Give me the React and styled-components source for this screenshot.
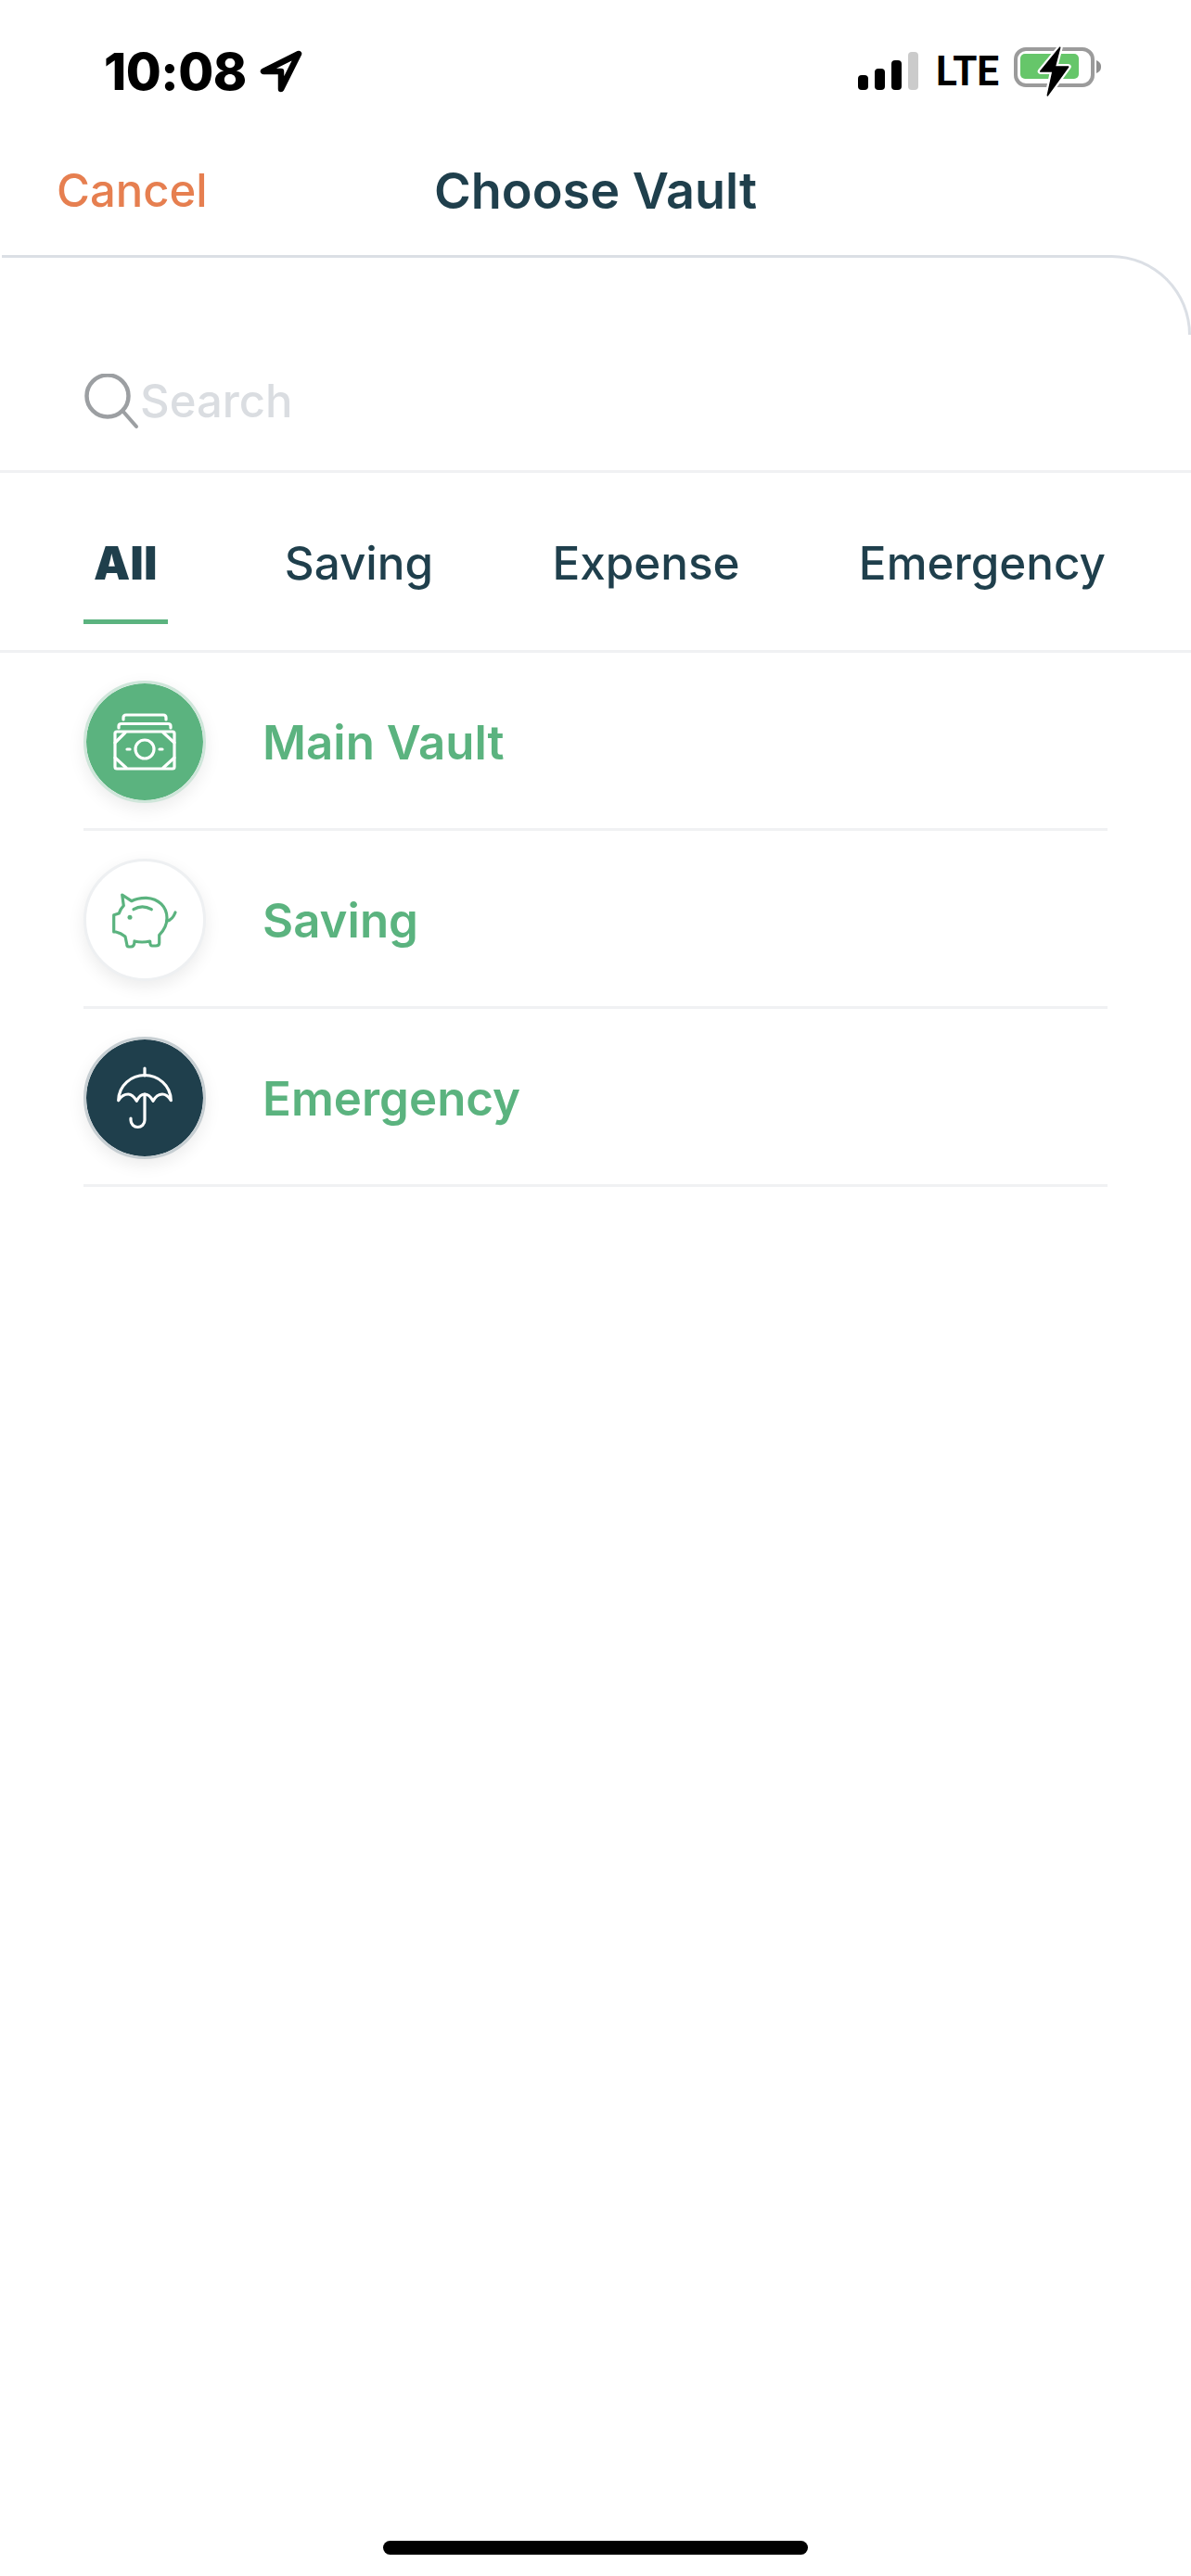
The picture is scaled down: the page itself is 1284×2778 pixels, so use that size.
import styled, { createGlobalStyle } from "styled-components";

const GlobalStyle = createGlobalStyle`
  html, body {
    margin: 0;
    padding: 0;
    background: #ffffff;
  }
  body {
    font-family: Inter, "Liberation Sans", sans-serif;
  }
`;

const Page = styled.div`
  display: flex;
  flex-direction: column;
  height: 2778px;
  overflow: hidden;
  background: #fff;
`;

const StatusBar = styled.div`
  display: flex;
  align-items: center;
  justify-content: space-between;
  height: 150px;
  box-sizing: border-box;
  padding: 3px 94px 0 112px;
  color: #000;
`;

const StatusLeft = styled.div`
  display: flex;
  align-items: center;
  gap: 14px;
`;

const Time = styled.span`
  font-size: 55px;
  font-weight: 800;
  letter-spacing: -0.5px;
`;

const StatusRight = styled.div`
  display: flex;
  align-items: center;
  gap: 19px;
`;

const Signal = styled.div`
  display: flex;
  align-items: flex-end;
  gap: 7px;
  height: 41px;
`;

const SignalBar = styled.span`
  width: 11px;
  height: ${(p) => p.$h}px;
  border-radius: 4px;
  background: ${(p) => (p.$off ? "#cbcbcb" : "#000")};
`;

const Lte = styled.span`
  width: 62px;
  font-family: Roboto, sans-serif;
  font-size: 44px;
  font-weight: 700;
  line-height: 1;
  transform: scaleX(0.96);
  transform-origin: left center;
`;

const NavBar = styled.div`
  display: grid;
  grid-template-columns: 1fr auto 1fr;
  align-items: center;
  height: 125px;
  box-sizing: border-box;
  padding: 0 61px 14px;
`;

const CancelText = styled.span`
  font-size: 49px;
  font-weight: 500;
  color: #e67f50;
`;

const Title = styled.span`
  font-size: 54px;
  font-weight: 600;
  color: #1f3f4c;
`;

const SearchPanel = styled.div`
  position: relative;
  display: flex;
  align-items: center;
  gap: 1px;
  height: 235px;
  padding: 83px 90px 0;
  box-sizing: border-box;
  border-bottom: 3px solid #f0f1f3;

  &::before {
    content: "";
    position: absolute;
    top: 0;
    left: 2px;
    right: 0;
    height: 86px;
    box-sizing: border-box;
    border-top: 3px solid #dbdfe5;
    border-right: 3px solid #dbdfe5;
    border-top-right-radius: 86px;
  }
`;

const SearchText = styled.span`
  font-size: 49px;
  font-weight: 500;
  color: #dadde1;
`;

const Tabs = styled.div`
  display: flex;
  justify-content: space-between;
  height: 194px;
  padding: 0 81px 0 90px;
  box-sizing: border-box;
  border-bottom: 3px solid #f0f1f3;
`;

const Tab = styled.div`
  display: flex;
  align-items: center;
  height: 163px;
  padding: 35px 11px 0;
  box-sizing: border-box;
  font-size: 49.4px;
  font-weight: ${(p) => (p.$active ? 900 : 500)};
  color: #1f3f4c;
  border-bottom: 5px solid ${(p) => (p.$active ? "#5bb37f" : "transparent")};

  &:first-child {
    margin-right: 9px;
  }
`;

const List = styled.div`
  display: flex;
  flex-direction: column;
  padding: 0 90px;
`;

const Row = styled.div`
  display: flex;
  align-items: center;
  gap: 61px;
  height: 192px;
  padding-top: 3px;
  box-sizing: border-box;
  border-bottom: 3px solid #f0f1f3;
`;

const Badge = styled.div`
  display: flex;
  flex-shrink: 0;
  width: 132px;
  height: 132px;
  border-radius: 50%;
  box-sizing: border-box;
  background: ${(p) => p.$bg};
  border: 3px solid ${(p) => p.$ring};
  background-clip: padding-box;
  box-shadow: 0 6px 18px rgba(0, 0, 0, 0.08);
  color: ${(p) => p.$fg};

  svg {
    margin: -3px;
  }
`;

const RowLabel = styled.span`
  font-size: 51px;
  font-weight: 600;
  color: #5bb37f;
`;

const HomeIndicator = styled.div`
  width: 458px;
  height: 15px;
  margin: auto auto 23px;
  border-radius: 8px;
  background: #000;
`;

function LocationArrow() {
  return (
    <svg width="46" height="46" viewBox="0 0 46 46">
      <path
        d="M42 4 L4 23 H23 V42 Z"
        fill="#fff"
        stroke="#000"
        strokeWidth="6.5"
        strokeLinejoin="round"
      />
    </svg>
  );
}

function Battery() {
  return (
    <svg width="100" height="60" viewBox="0 0 100 60">
      <rect x="5" y="6" width="83" height="39" rx="11" fill="none" stroke="#9b9b9b" strokeWidth="4" />
      <rect x="10" y="11" width="63" height="27" rx="5" fill="#66c66a" />
      <path d="M92 18 C96 20 97 22 97 25 C97 28 96 30 92 32 Z" fill="#8f8f8f" />
      <path
        d="M52.7 4.3 L31.7 30 H45 L39.3 56 L61.7 25 H47.3 Z"
        fill="#000"
        stroke="#fff"
        strokeWidth="6"
        strokeLinejoin="round"
        paintOrder="stroke"
      />
      <path d="M52.7 4.3 L31.7 30 H45 L39.3 56 L61.7 25 H47.3 Z" fill="#000" stroke="#000" strokeWidth="1.5" strokeLinejoin="round" />
    </svg>
  );
}

function SearchIcon() {
  return (
    <svg width="60" height="60" viewBox="0 0 60 60" fill="none" stroke="#9c9fa2">
      <circle cx="26" cy="24" r="22.5" strokeWidth="4.5" />
      <path d="M43 41 L57 57" strokeWidth="4" strokeLinecap="round" />
    </svg>
  );
}

function MoneyIcon() {
  return (
    <svg width="132" height="132" viewBox="0 0 132 132" fill="none" stroke="currentColor" strokeWidth="3.2" strokeLinecap="round" strokeLinejoin="round">
      <rect x="34" y="55" width="64" height="40" rx="2" />
      <circle cx="66" cy="74" r="10" />
      <path d="M34 67 L45 56 M34 83 L46 94 M98 67 L86 56 M98 83 L86 94" />
      <path d="M47 74 H50 M82 74 H85" />
      <path d="M38 51 V49 Q38 46.5 41 46.5 H91 Q94 46.5 94 49 V51" />
      <path d="M43 42 V40 Q43 37 46 37 H86 Q89 37 89 40 V42" />
    </svg>
  );
}

function PiggyIcon() {
  return (
    <svg width="132" height="132" viewBox="0 0 132 132" fill="none" stroke="currentColor" strokeWidth="3.2" strokeLinecap="round" strokeLinejoin="round">
      <path d="M41.7 39 L51.7 45.7 Q59 42 68 42.3 C81 43 90 52 90 64 C90 71 87 77 81.7 82.3 V91 Q81.7 94 78 94 H74 Q71.7 94 71.7 89 Q63 91 55 89 Q55 95 51 95 H49 Q46.7 95 46.7 92 L45 84 Q40 80 35 79 H32.7 V60.7 L38.3 59 Q40 54 43.3 50.7 Z" />
      <path d="M90 67.3 Q96 66 99 58" />
      <path d="M54 54.7 Q63.3 49 73.3 54.7" />
      <circle cx="50" cy="63.3" r="2.5" fill="currentColor" stroke="none" />
    </svg>
  );
}

function UmbrellaIcon() {
  return (
    <svg width="132" height="132" viewBox="0 0 132 132" fill="none" stroke="currentColor" strokeWidth="3.2" strokeLinecap="round" strokeLinejoin="round">
      <path d="M66 34 V42" />
      <path d="M37.7 68.7 C38 52 52 41.5 66 41.5 C80 41.5 94 52 94.3 68.7 Q90 62 85 62 Q79 62 75 69.3 Q71 62 66 62 Q61 62 57.3 69.3 Q53 62 48.3 62 Q42 62 37.7 68.7 Z" />
      <path d="M66 62 V90 A7.5 7.5 0 0 1 51 90 V88" />
    </svg>
  );
}

const vaults = [
  { name: "Main Vault", bg: "#5bb37f", ring: "#cfe6da", fg: "#fff", Icon: MoneyIcon },
  { name: "Saving", bg: "#fff", ring: "#eef0f2", fg: "#5bb37f", Icon: PiggyIcon },
  { name: "Emergency", bg: "#1f3f4c", ring: "#c6ced2", fg: "#fff", Icon: UmbrellaIcon },
];

const tabs = ["All", "Saving", "Expense", "Emergency"];

export default function App() {
  return (
    <>
      <GlobalStyle />
      <Page>
        <StatusBar>
          <StatusLeft>
            <Time>10:08</Time>
            <LocationArrow />
          </StatusLeft>
          <StatusRight>
            <Signal>
              <SignalBar $h={16} />
              <SignalBar $h={23} />
              <SignalBar $h={32} />
              <SignalBar $h={41} $off />
            </Signal>
            <Lte>LTE</Lte>
            <Battery />
          </StatusRight>
        </StatusBar>
        <NavBar>
          <CancelText>Cancel</CancelText>
          <Title>Choose Vault</Title>
        </NavBar>
        <SearchPanel>
          <SearchIcon />
          <SearchText>Search</SearchText>
        </SearchPanel>
        <Tabs>
          {tabs.map((t, i) => (
            <Tab key={t} $active={i === 0}>
              {t}
            </Tab>
          ))}
        </Tabs>
        <List>
          {vaults.map(({ name, bg, ring, fg, Icon }) => (
            <Row key={name}>
              <Badge $bg={bg} $ring={ring} $fg={fg}>
                <Icon />
              </Badge>
              <RowLabel>{name}</RowLabel>
            </Row>
          ))}
        </List>
        <HomeIndicator />
      </Page>
    </>
  );
}
